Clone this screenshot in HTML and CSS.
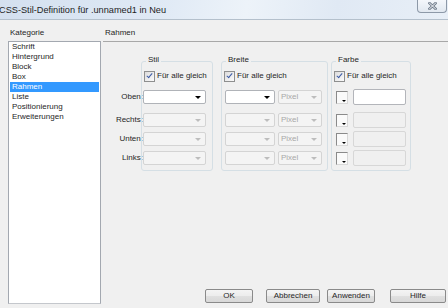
FILE: index.html
```html
<!DOCTYPE html>
<html lang="de">
<head>
  <meta charset="UTF-8">
  <meta name="viewport" content="width=device-width, initial-scale=1.0">
  <title>CSS-Stil-Definition</title>
  <link rel="stylesheet" href="styles.css">
</head>

<body>

  <div class="titlebar">
    <span class="title">CSS-Stil-Definition für .unnamed1 in Neu</span>
    <span class="close">
      <svg width="9" height="8" viewBox="0 0 9 8">
        <path d="M1.5 1.2 L7.5 6.8 M7.5 1.2 L1.5 6.8" stroke="#6f7b8a" stroke-width="2.6" stroke-linecap="square"/>
        <path d="M1.5 1.2 L7.5 6.8 M7.5 1.2 L1.5 6.8" stroke="#f4f6f9" stroke-width="1" stroke-linecap="square"/>
      </svg>
    </span>
  </div>

  <div class="dialog">
    <div class="category">
      <div class="caption">Kategorie</div>
      <ul class="list">
        <li>Schrift</li>
        <li>Hintergrund</li>
        <li>Block</li>
        <li>Box</li>
        <li class="selected">Rahmen</li>
        <li>Liste</li>
        <li>Positionierung</li>
        <li>Erweiterungen</li>
      </ul>
    </div>

    <div class="panel">
      <div class="panel-head">Rahmen</div>

      <div class="groups">
        <div class="labels">
          <span class="first">Oben:</span>
          <span>Rechts:</span>
          <span>Unten:</span>
          <span>Links:</span>
        </div>

        <div class="group stil">
          <span class="legend">Stil</span>
          <div class="check"><span class="box"></span>Für alle gleich</div>
          <div class="rows">
            <div class="row first"><span class="combo wide"></span></div>
            <div class="row"><span class="combo wide disabled"></span></div>
            <div class="row"><span class="combo wide disabled"></span></div>
            <div class="row"><span class="combo wide disabled"></span></div>
          </div>
        </div>

        <div class="group breite">
          <span class="legend">Breite</span>
          <div class="check"><span class="box"></span>Für alle gleich</div>
          <div class="rows">
            <div class="row first"><span class="combo size"></span><span class="combo unit disabled">Pixel</span></div>
            <div class="row"><span class="combo size disabled"></span><span class="combo unit disabled">Pixel</span></div>
            <div class="row"><span class="combo size disabled"></span><span class="combo unit disabled">Pixel</span></div>
            <div class="row"><span class="combo size disabled"></span><span class="combo unit disabled">Pixel</span></div>
          </div>
        </div>

        <div class="group farbe">
          <span class="legend">Farbe</span>
          <div class="check"><span class="box"></span>Für alle gleich</div>
          <div class="rows">
            <div class="row first"><span class="swatch"></span><span class="field"></span></div>
            <div class="row"><span class="swatch"></span><span class="field disabled"></span></div>
            <div class="row"><span class="swatch"></span><span class="field disabled"></span></div>
            <div class="row"><span class="swatch"></span><span class="field disabled"></span></div>
          </div>
        </div>
      </div>

      <div class="buttons">
        <button class="btn-ok">OK</button>
        <button class="btn-cancel">Abbrechen</button>
        <button class="btn-apply">Anwenden</button>
        <button class="btn-help">Hilfe</button>
      </div>
    </div>
  </div>

</body>
</html>
```

FILE: styles.css
```css
body {
  margin: 0;
  width: 448px;
  height: 308px;
  overflow: hidden;
  background-color: #f0f0f0;
  font-family: "Liberation Sans", Arial, sans-serif;
  font-size: 8px;
  line-height: 10px;
  color: #262626;
}

.titlebar {
  height: 19px;
  border-bottom: 1px solid #b4c0cc;
  background: linear-gradient(100deg, #d4e0ef 0%, #dfe9f5 35%, #edf3f9 55%, #e0e9f4 75%, #e8eff7 100%);
  display: flex;
  align-items: center;
  justify-content: space-between;
}

.title {
  font-size: 9.2px;
  margin-left: -1px;
  margin-top: 1px;
  color: #1e1e1e;
}

.close {
  align-self: flex-start;
  width: 28px;
  height: 12px;
  margin-right: 1px;
  border: 1px solid #8d99a8;
  border-top: none;
  border-radius: 0 0 4px 4px;
  background: linear-gradient(#f4f7fb, #e1e8f0);
  display: flex;
  align-items: center;
  justify-content: center;
}

.dialog {
  display: flex;
  height: 288px;
}

.category {
  width: 93px;
  margin-left: 8px;
}

.caption {
  height: 21px;
  padding: 8px 0 0 2px;
  box-sizing: border-box;
}

.list {
  margin: 0;
  padding: 0 1px;
  list-style: none;
  height: 263px;
  box-sizing: border-box;
  background-color: #fff;
  border: 1px solid #a3a8b0;
  border-bottom-color: #c4c7cc;
}

.list li {
  height: 10px;
  line-height: 10px;
  padding-left: 2px;
}

.list li.selected {
  background-color: #3399ff;
  color: #fff;
}

.panel {
  flex: 1;
  margin-left: 2px;
  display: flex;
  flex-direction: column;
}

.panel-head {
  height: 22px;
  padding: 8px 0 0 2px;
  box-sizing: border-box;
  border-bottom: 1px solid #a8a8a8;
}

.groups {
  display: flex;
  align-items: flex-start;
  margin-top: 19px;
}

.labels {
  width: 40px;
  margin-right: -2px;
  padding-top: 29px;
  display: flex;
  flex-direction: column;
  gap: 5px;
  text-align: right;
}

.labels span {
  height: 14px;
  line-height: 14px;
}

.labels .first {
  margin-bottom: 4px;
}

.group {
  border: 1px solid #d5dfe5;
  border-radius: 3px;
  padding: 0 2px 5px 2px;
  box-sizing: border-box;
}

.stil {
  width: 72px;
}

.breite {
  width: 107px;
  margin-left: 8px;
}

.farbe {
  width: 80px;
  margin-left: 3px;
}

.legend {
  display: table;
  margin: -7px 0 0 2px;
  padding: 0 2px;
  background-color: #f0f0f0;
}

.check {
  display: flex;
  align-items: center;
  gap: 2px;
  height: 10px;
  margin-top: 6px;
}

.box {
  width: 9px;
  height: 9px;
  border: 1px solid #8e8f8f;
  background: linear-gradient(135deg, #dcdcdc, #fbfbfb);
  position: relative;
}

.box::after {
  content: "";
  position: absolute;
  left: 3px;
  top: 0px;
  width: 2px;
  height: 5px;
  border: solid #3a5aa6;
  border-width: 0 1.6px 1.6px 0;
  transform: rotate(40deg);
}

.rows {
  margin-top: 9px;
  display: flex;
  flex-direction: column;
  gap: 5px;
}

.row {
  display: flex;
  align-items: center;
  gap: 3px;
  height: 14px;
}

.row.first {
  margin-bottom: 4px;
}

.combo {
  height: 14px;
  box-sizing: border-box;
  border: 1px solid #b0b3b8;
  border-radius: 2px;
  background-color: #fff;
  position: relative;
  padding-left: 2px;
  line-height: 12px;
}

.combo::after {
  content: "";
  position: absolute;
  right: 4px;
  top: 5px;
  border-left: 3px solid transparent;
  border-right: 3px solid transparent;
  border-top: 3px solid #000;
}

.combo.disabled {
  border-color: #d4d4d4;
  background-color: #f4f4f4;
  color: #a8a8a8;
}

.combo.disabled::after {
  border-top-color: #bdbdbd;
}

.wide {
  width: 63px;
  margin-left: -1px;
}

.size {
  width: 50px;
  margin-left: 1px;
}

.unit {
  width: 44px;
}

.swatch {
  width: 12px;
  height: 13px;
  margin-left: 2px;
  margin-right: 2px;
  box-sizing: border-box;
  border: 1px solid #d8d8d8;
  border-top-color: #8a8a8a;
  border-left-color: #8a8a8a;
  background-color: #fafafa;
  position: relative;
}

.swatch::after {
  content: "";
  position: absolute;
  right: 1px;
  bottom: 1px;
  border-left: 2px solid transparent;
  border-right: 2px solid transparent;
  border-top: 2px solid #000;
}

.field {
  width: 53px;
  height: 16px;
  box-sizing: border-box;
  border: 1px solid #b3b5ba;
  border-radius: 2px;
  background-color: #fff;
}

.field.disabled {
  border-color: #d7d7d7;
  background-color: #f0f0f0;
}

.buttons {
  margin-top: auto;
  padding: 0 2px 5px 0;
  display: flex;
  justify-content: flex-end;
}

.buttons button {
  height: 14px;
  padding: 0;
  font-family: inherit;
  font-size: 8px;
  line-height: 12px;
  color: #262626;
  border: 1px solid #8a8a8a;
  border-radius: 2px;
  background: linear-gradient(#f4f4f4 0%, #ececec 50%, #e0e0e0 51%, #d8d8d8 100%);
}

.btn-ok {
  width: 48px;
}

.btn-cancel {
  width: 54px;
  margin-left: 13px;
}

.btn-apply {
  width: 48px;
  margin-left: 7px;
}

.btn-help {
  width: 56px;
  margin-left: 15px;
}
```
